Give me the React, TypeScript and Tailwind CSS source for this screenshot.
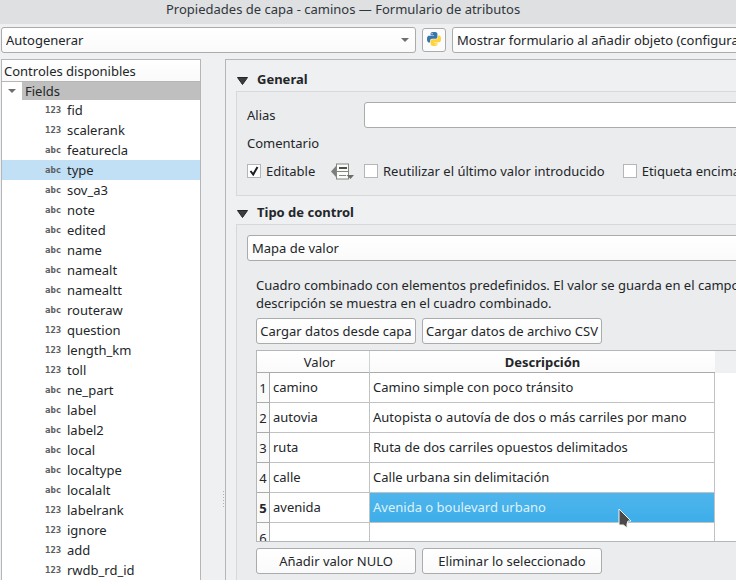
import React from "react";

type Kind = "123" | "abc";

const fields: [Kind, string][] = [
  ["123", "fid"],
  ["123", "scalerank"],
  ["abc", "featurecla"],
  ["abc", "type"],
  ["abc", "sov_a3"],
  ["abc", "note"],
  ["abc", "edited"],
  ["abc", "name"],
  ["abc", "namealt"],
  ["abc", "namealtt"],
  ["abc", "routeraw"],
  ["123", "question"],
  ["123", "length_km"],
  ["123", "toll"],
  ["abc", "ne_part"],
  ["abc", "label"],
  ["abc", "label2"],
  ["abc", "local"],
  ["abc", "localtype"],
  ["abc", "localalt"],
  ["123", "labelrank"],
  ["123", "ignore"],
  ["123", "add"],
  ["123", "rwdb_rd_id"],
];

const values: [string, string][] = [
  ["camino", "Camino simple con poco tránsito"],
  ["autovia", "Autopista o autovía de dos o más carriles por mano"],
  ["ruta", "Ruta de dos carriles opuestos delimitados"],
  ["calle", "Calle urbana sin delimitación"],
  ["avenida", "Avenida o boulevard urbano"],
  ["", ""],
];

const control = "h-[26px] rounded-[3px] border border-[#a9abac] bg-linear-to-b from-white to-[#fafafa]";

function PythonLogo() {
  return (
    <svg viewBox="0 0 24 24" className="mb-[2px] size-[14px]" aria-hidden="true">
      <path
        fill="#3776ab"
        d="M14.25.18l.9.2.73.26.59.3.45.32.34.34.25.34.16.33.1.3.04.26.02.2-.01.13V8.5l-.05.63-.13.55-.21.46-.26.38-.3.31-.33.25-.35.19-.35.14-.33.1-.3.07-.26.04-.21.02H8.77l-.69.05-.59.14-.5.22-.41.27-.33.32-.27.35-.2.36-.15.37-.1.35-.07.32-.04.27-.02.21v3.06H3.17l-.21-.03-.28-.07-.32-.12-.35-.18-.36-.26-.36-.36-.35-.46-.32-.59-.28-.73-.21-.88-.14-1.05-.05-1.23.06-1.22.16-1.04.24-.87.32-.71.36-.57.4-.44.42-.33.42-.24.4-.16.36-.1.32-.05.24-.01h.16l.06.01h8.16v-.83H6.18l-.01-2.75-.02-.37.05-.34.11-.31.17-.28.25-.26.31-.23.38-.2.44-.18.51-.15.58-.12.64-.1.71-.06.77-.04.84-.02 1.27.05zm-6.3 1.98l-.23.33-.08.41.08.41.23.34.33.22.41.09.41-.09.33-.22.23-.34.08-.41-.08-.41-.23-.33-.33-.22-.41-.09-.41.09z"
      />
      <path
        fill="#ffd43b"
        d="M21.1 6.11l.28.06.32.12.35.18.36.27.36.35.35.47.32.59.28.73.21.88.14 1.04.05 1.23-.06 1.23-.16 1.04-.24.86-.32.71-.36.57-.4.45-.42.33-.42.24-.4.16-.36.09-.32.05-.24.02-.16-.01h-8.22v.82h5.84l.01 2.76.02.36-.05.34-.11.31-.17.29-.25.25-.31.24-.38.2-.44.17-.51.15-.58.13-.64.09-.71.07-.77.04-.84.01-1.27-.04-1.07-.14-.9-.2-.73-.25-.59-.3-.45-.33-.34-.34-.25-.34-.16-.33-.1-.3-.04-.25-.02-.2.01-.13v-5.34l.05-.64.13-.54.21-.46.26-.38.3-.32.33-.24.35-.2.35-.14.33-.1.3-.06.26-.04.21-.02.13-.01h5.84l.69-.05.59-.14.5-.21.41-.28.33-.32.27-.35.2-.36.15-.36.1-.35.07-.32.04-.28.02-.21V6.07h2.09l.14.01zm-6.47 14.25l-.23.33-.08.41.08.41.23.33.33.23.41.08.41-.08.33-.23.23-.33.08-.41-.08-.41-.23-.33-.33-.23-.41-.08-.41.08z"
      />
    </svg>
  );
}

function Check({ label, checked = false }: { label: string; checked?: boolean }) {
  return (
    <label className="flex shrink-0 items-center gap-[5px]">
      <span className="relative size-[14px]">
        <input
          type="checkbox"
          defaultChecked={checked}
          className="peer block size-[14px] appearance-none border border-[#b4b6b8] bg-white"
        />
        <svg
          viewBox="0 0 14 14"
          className="pointer-events-none absolute inset-0 hidden size-[14px] peer-checked:block"
          aria-hidden="true"
        >
          <path d="M3.5 7 L6.2 10.5 L10.5 3" fill="none" stroke="#1b1e20" strokeWidth="2" />
        </svg>
      </span>
      {label}
    </label>
  );
}

function LabelOptionsIcon() {
  return (
    <svg viewBox="0 0 23 17" className="block h-[17px] w-[23px]" aria-hidden="true">
      <path d="M0 8.5 L5 3 V14 Z" fill="#7d7f7d" />
      <rect x="5.5" y="1" width="12" height="15" fill="#fcfcfc" stroke="#82877c" />
      <rect x="8" y="4" width="8" height="2" fill="#4d4f4d" />
      <path d="M6 8.5 H17" stroke="#82877c" />
      <path d="M8 12.5 H15" stroke="#82877c" />
      <path d="M15.5 12 H23 L19.5 16 Z" fill="#6b6d6b" />
    </svg>
  );
}

function GroupTitle({ children }: { children: React.ReactNode }) {
  return (
    <h2 className="flex h-[21px] items-start gap-[9px] font-bold">
      <svg viewBox="0 0 11 8" className="mt-[7px] ml-px h-[8px] w-[11px]" aria-hidden="true">
        <path d="M0.5 0.5 H10.5 L5.5 7.5 Z" fill="#3b3d3f" stroke="#232629" />
      </svg>
      {children}
    </h2>
  );
}

function Pointer() {
  return (
    <svg viewBox="0 0 14 21" className="pointer-events-none absolute top-[15px] right-[82px] h-[21px] w-[14px]" aria-hidden="true">
      <path
        d="M1 1 V17 L5.5 17 L9 20 L9 16 L10 13 H13 Z"
        fill="#4a4a4a"
        stroke="#f4f4f4"
        strokeLinejoin="round"
      />
    </svg>
  );
}

export default function App() {
  return (
    <div className="flex h-screen flex-col overflow-hidden bg-[#eff0f1] font-['Noto_Sans',sans-serif] text-[13px] leading-[18px] whitespace-nowrap text-[#232629]">
      <header className="h-[24px] shrink-0 bg-[#dee0e2] pl-[166px] text-[#31363b]">
        Propiedades de capa - caminos — Formulario de atributos
      </header>

      <div className="flex shrink-0 items-center gap-[6px] pt-[3px] pb-[6px] pl-px">
        <div className="relative w-[415px] shrink-0">
          <select aria-label="Modo de formulario" className={`${control} block w-full appearance-none pl-[4px]`}>
            <option>Autogenerar</option>
          </select>
          <svg viewBox="0 0 8 4" className="pointer-events-none absolute top-[11px] right-[7px] h-[4px] w-[8px]" aria-hidden="true">
            <path d="M0 0 H8 L4 4 Z" fill="#6c6f72" />
          </svg>
        </div>
        <button
          aria-label="Python"
          className="flex size-[24px] shrink-0 items-center justify-center rounded-[3px] border border-[#a9abac] bg-[#fcfcfc]"
        >
          <PythonLogo />
        </button>
        <select aria-label="Mostrar formulario" className={`${control} w-[420px] shrink-0 appearance-none pl-[4px]`}>
          <option>Mostrar formulario al añadir objeto (configuración global)</option>
        </select>
      </div>

      <div className="flex min-h-0 flex-1">
        <aside className="ml-px w-[200px] shrink-0 overflow-hidden border-x border-t border-[#b4b6b8] bg-white">
          <div className="flex h-[22px] items-center border-b border-[#b4b6b8] bg-linear-to-b from-white to-[#fafafa] pl-[2px]">
            Controles disponibles
          </div>
          <div className="flex h-[18px] items-center">
            <span className="flex w-[20px] justify-center">
              <svg viewBox="0 0 8 4" className="h-[4px] w-[8px]" aria-hidden="true">
                <path d="M0 0 H8 L4 4 Z" fill="#6c6f72" />
              </svg>
            </span>
            <span className="flex-1 bg-[#bfbfbf] pl-[3px]">Fields</span>
          </div>
          <ul>
            {fields.map(([kind, name]) => (
              <li
                key={name}
                className={`flex h-[20px] items-center gap-[6px] pl-[43px] ${name === "type" ? "bg-[#c1dff5]" : ""}`}
              >
                <span className="w-[16px] pb-px font-['DejaVu_Sans_Mono',monospace] text-[9px] leading-[16px] font-bold text-[#5a5c5e]">
                  {kind}
                </span>
                {name}
              </li>
            ))}
          </ul>
        </aside>

        <div className="flex w-[24px] shrink-0 justify-end pt-[432px]">
          <svg viewBox="0 0 2 17" className="h-[17px] w-[2px]" aria-hidden="true">
            <path d="M0.5 0 V17" stroke="#b0b2b4" strokeDasharray="1 2" />
          </svg>
        </div>

        <main className="min-w-0 flex-1 overflow-hidden border-t border-l border-[#b4b6b8] pt-[10px] pl-[10px]">
          <section>
            <GroupTitle>General</GroupTitle>
            <div className="flex h-[105px] flex-col border-y border-l border-[#d6d8da] bg-[#ebecee] pt-[10px] pl-[10px]">
              <div className="flex items-center">
                <label htmlFor="alias" className="w-[117px] shrink-0">
                  Alias
                </label>
                <input id="alias" type="text" className="h-[26px] w-[500px] shrink-0 rounded-[3px] border border-[#a9abac] bg-white px-[4px]" />
              </div>
              <div className="mt-[6px]">Comentario</div>
              <div className="mt-[10px] flex items-center">
                <div className="flex w-[117px] shrink-0 items-center gap-[16px]">
                  <Check label="Editable" checked />
                  <button aria-label="Opciones">
                    <LabelOptionsIcon />
                  </button>
                </div>
                <div className="flex gap-[18px]">
                  <Check label="Reutilizar el último valor introducido" />
                  <Check label="Etiqueta encima" />
                </div>
              </div>
            </div>
          </section>

          <section className="mt-[7px]">
            <GroupTitle>Tipo de control</GroupTitle>
            <div className="border-t border-l border-[#d6d8da] bg-[#ebecee] pt-[10px] pb-[40px] pl-[10px]">
              <select aria-label="Tipo de control" className={`${control} block w-[640px] appearance-none pl-[4px]`}>
                <option>Mapa de valor</option>
              </select>
              <div className="pt-[15px] pl-[9px]">
                <p>
                  Cuadro combinado con elementos predefinidos. El valor se guarda en el campo
                  <br />
                  descripción se muestra en el cuadro combinado.
                </p>
                <div className="mt-[6px] flex gap-[6px]">
                  <button className={`${control} w-[160px]`}>Cargar datos desde capa</button>
                  <button className={`${control} w-[180px]`}>Cargar datos de archivo CSV</button>
                </div>
                <div className="mt-[6px] h-[192px] overflow-hidden border-y border-l border-[#b4b6b8] bg-linear-to-b from-[#eff0f1] from-[22px] to-white to-[22px]">
                  <table className="w-[458px] table-fixed border-separate border-spacing-0">
                    <colgroup>
                      <col className="w-[13px]" />
                      <col className="w-[100px]" />
                      <col className="w-[345px]" />
                    </colgroup>
                    <thead>
                      <tr className="h-[22px] bg-linear-to-b from-white to-[#fafafa]">
                        <th colSpan={2} className="border-r border-b border-r-[#d0d2d4] border-b-[#a9abac] p-0 pl-[13px] font-normal">
                          Valor
                        </th>
                        <th className="border-b border-[#a9abac] p-0 font-bold">Descripción</th>
                      </tr>
                    </thead>
                    <tbody>
                      {values.map(([value, description], i) => {
                        const selected = i === 4;
                        return (
                          <tr key={i} className="h-[30px]">
                            <th
                              className={`border-r border-b border-[#a9abac] bg-[#fafafa] p-0 text-center ${selected ? "font-bold" : "font-normal"}`}
                            >
                              {i + 1}
                            </th>
                            <td className="border-r border-b border-[#c0c2c4] p-0 pb-[2px] pl-[3px]">{value}</td>
                            <td
                              className={`relative border-r border-b border-[#c0c2c4] p-0 pb-[2px] pl-[3px] ${
                                selected ? "bg-linear-to-b from-[#4fb5ec] to-[#3daee9] text-[#dff1fb]" : ""
                              }`}
                            >
                              {description}
                              {selected && <Pointer />}
                            </td>
                          </tr>
                        );
                      })}
                    </tbody>
                  </table>
                </div>
                <div className="mt-[6px] flex gap-[6px]">
                  <button className={`${control} w-[160px]`}>Añadir valor NULO</button>
                  <button className={`${control} w-[180px]`}>Eliminar lo seleccionado</button>
                </div>
              </div>
            </div>
          </section>
        </main>
      </div>
    </div>
  );
}
